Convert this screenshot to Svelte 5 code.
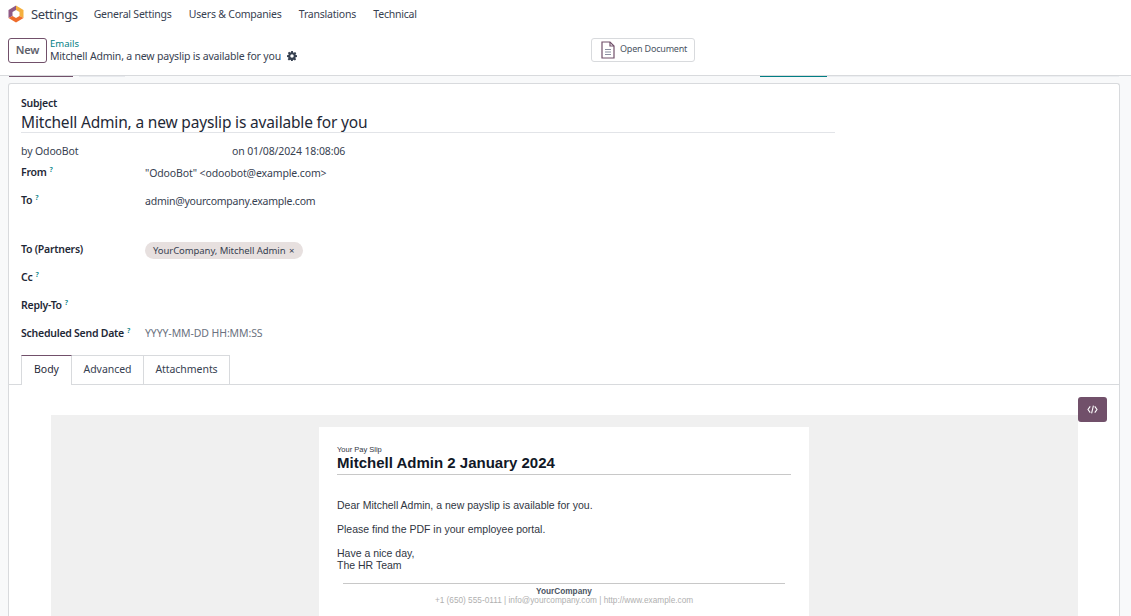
<script>
  const fields = [
    { label: 'From', help: true, value: '"OdooBot" <odoobot@example.com>', cls: 'r-from' },
    { label: 'To', help: true, value: 'admin@yourcompany.example.com', cls: 'r-to' },
    { label: 'To (Partners)', help: false, tag: 'YourCompany, Mitchell Admin', cls: 'r-partners' },
    { label: 'Cc', help: true, value: '', cls: 'r-cc' },
    { label: 'Reply-To', help: true, value: '', cls: 'r-reply' },
    { label: 'Scheduled Send Date', help: true, value: 'YYYY-MM-DD HH:MM:SS', muted: true, cls: 'r-date' }
  ];
</script>

<div class="page">
  <nav class="nav">
    <svg class="logo" viewBox="0 0 18 18" width="18" height="18" aria-hidden="true">
      <path d="M9 .5 16.500 5v8L12.500 11V7L9 5z" fill="#f5b03e"/>
      <path d="M9 .5 1.500 5v8l4-2V7L9 5z" fill="#8f5a86"/>
      <path d="M1.500 13 9 17.500 16.500 13l-4-2L9 13l-3.500-2z" fill="#ee6c2b"/>
    </svg>
    <span class="brand">Settings</span>
    <span class="menu">General Settings</span>
    <span class="menu">Users &amp; Companies</span>
    <span class="menu">Translations</span>
    <span class="menu">Technical</span>
  </nav>

  <header class="control">
    <button class="new">New</button>
    <div class="crumbs">
      <span class="crumb">Emails</span>
      <div class="title">
        <span>Mitchell Admin, a new payslip is available for you</span>
        <svg viewBox="0 0 16 16" width="10" height="10" aria-hidden="true">
          <path fill="#374151" fill-rule="evenodd" d="M6.600 0h2.800l.4 2.200 1.200.5L12.900 1.400l2 2-1.300 1.900.5 1.200 1.900.4v2.800l-2.200.4-.5 1.200 1.300 1.900-2 2-1.900-1.300-1.200.5-.4 2.100H6.600l-.4-2.200-1.200-.5-1.900 1.300-2-2 1.300-1.900-.5-1.200L0 9.400V6.600l2.200-.4.5-1.200L1.400 3.100l2-2 1.900 1.300 1.200-.5zM8 5.200a2.800 2.800 0 1 0 0 5.600 2.800 2.800 0 0 0 0-5.600z"/>
        </svg>
      </div>
    </div>
    <button class="doc">
      <svg viewBox="0 0 16 18" width="16" height="18" aria-hidden="true">
        <path d="M2 1h8l4 4v12H2z" fill="#fff" stroke="#71506a" stroke-width="1.200"/>
        <path d="M10 1v4h4" fill="none" stroke="#71506a" stroke-width="1.200"/>
        <path d="M5 8.500h6M5 11h6M5 13.500h6" stroke="#8a8fa0" stroke-width="1.200"/>
      </svg>
      <span>Open Document</span>
    </button>
  </header>

  <div class="band">
    <i class="stub purple"></i>
    <i class="stub gray"></i>
    <i class="stub teal"></i>
    <i class="stub rest"></i>
  </div>

  <main class="sheet">
    <div class="subject-block">
      <div class="label">Subject</div>
      <div class="subject">Mitchell Admin, a new payslip is available for you</div>
    </div>
    <div class="meta">
      <span class="by">by OdooBot</span>
      <span>on 01/08/2024 18:08:06</span>
    </div>

    <div class="fields">
      {#each fields as f}
        <div class="row {f.cls}">
          <div class="label">{f.label}{#if f.help}<sup>?</sup>{/if}</div>
          {#if f.tag}
            <span class="tag">{f.tag} <b>×</b></span>
          {:else}
            <div class="value" class:muted={f.muted}>{f.value}</div>
          {/if}
        </div>
      {/each}
    </div>

    <div class="tabs">
      <span class="tab active">Body</span>
      <span class="tab adv">Advanced</span>
      <span class="tab att">Attachments</span>
    </div>

    <div class="body">
      <button class="code" aria-label="Code view">
        <svg viewBox="0 0 12 10" width="11" height="9" aria-hidden="true">
          <path d="M3.500 1.500 1 5l2.500 3.500M8.500 1.500 11 5 8.500 8.500M7 .8 5 9.200" fill="none" stroke="#fff" stroke-width="1.200"/>
        </svg>
      </button>
      <div class="canvas">
        <div class="mail">
          <div class="mail-top">
            <div class="small">Your Pay Slip</div>
            <div class="head">Mitchell Admin 2 January 2024</div>
          </div>
          <div class="mail-body">
            <p>Dear Mitchell Admin, a new payslip is available for you.</p>
            <p>Please find the PDF in your employee portal.</p>
            <p>Have a nice day,<br />The HR Team</p>
          </div>
          <div class="mail-foot">
            <div class="company">YourCompany</div>
            <div class="contact">+1 (650) 555-0111 | info@yourcompany.com | http://www.example.com</div>
          </div>
        </div>
      </div>
    </div>
  </main>
</div>

<style>
  :global(body) { margin: 0; overflow: hidden; background: #fff; }
  .page {
    width: 1131px;
    height: 616px;
    overflow: hidden;
    background: #f8f9fa;
    font-family: "Noto Sans", "Open Sans", sans-serif;
    font-size: 11.5px;
    color: #374151;
    display: flex;
    flex-direction: column;
  }
  .nav {
    height: 28px;
    background: #fff;
    display: flex;
    align-items: center;
    padding-left: 7px;
    flex: none;
  }
  .logo { flex: none; margin-right: 6px; }
  .brand { font-size: 13px; letter-spacing: -0.35px; margin-right: 16px; }
  .menu { margin-right: 17.300px; font-size: 10.500px; letter-spacing: -0.22px; }
  .control {
    height: 48px;
    background: #fff;
    border-bottom: 1px solid #d8dadd;
    display: flex;
    align-items: flex-start;
    padding: 10px 0 0 8px;
    position: relative;
    flex: none;
    box-sizing: border-box;
  }
  button { font-family: inherit; cursor: pointer; }
  .new {
    width: 39px;
    height: 25px;
    padding: 0 0 3px;
    margin-right: 3px;
    background: #fff;
    border: 1px solid #71506a;
    border-radius: 3px;
    color: #5f5f6b;
    font-weight: 600;
    font-size: 11px;
    letter-spacing: -0.25px;
  }
  .crumbs { display: flex; flex-direction: column; line-height: 12px; }
  .crumb { color: #017e84; font-size: 9.500px; }
  .title { display: flex; align-items: center; gap: 6px; font-size: 10.500px; letter-spacing: -0.19px; }
  .doc {
    position: absolute;
    left: 591px;
    top: 10px;
    width: 104px;
    height: 24px;
    display: flex;
    align-items: center;
    gap: 4px;
    padding: 0 0 0 8px;
    background: #fff;
    border: 1px solid #d8dadd;
    border-radius: 3px;
    color: #4b5563;
    font-size: 9px;
    letter-spacing: -0.2px;
    box-sizing: border-box;
  }
  .doc svg { margin-top: -1px; }
  .doc span { margin-bottom: 3px; }
  .band { height: 7px; position: relative; flex: none; }
  .stub { position: absolute; top: 0; height: 1px; }
  .purple { left: 9px; width: 64px; background: #71506a; }
  .gray { left: 79px; width: 46px; background: #e7e9ed; }
  .teal { left: 760px; width: 67px; background: #017e84; }
  .rest { left: 827px; width: 292px; background: #eceef1; }
  .sheet {
    margin-left: 8px;
    margin-right: 11px;
    flex: 1;
    background: #fff;
    border: 1px solid #d8dadd;
    border-bottom: 0;
    border-radius: 3px 3px 0 0;
    min-height: 0;
  }
  .subject-block { margin: 12px 0 0 12px; width: 814px; border-bottom: 1px solid #e2e4e8; }
  .label { font-weight: 600; color: #1f2937; font-size: 10.500px; line-height: 14px; letter-spacing: -0.25px; }
  .subject { font-size: 15.500px; line-height: 20px; padding-top: 2px; letter-spacing: -0.17px; color: #1f2937; }
  .meta { display: flex; margin: 11px 0 0 12px; line-height: 15px; font-size: 10.500px; letter-spacing: -0.12px; }
  .by { width: 211px; }
  .fields { margin: 0 0 0 12px; }
  .row { display: grid; grid-template-columns: 124px 1fr; align-items: center; }
  .r-from { height: 28px; align-items: start; padding-top: 6px; box-sizing: border-box; }
  .r-to { height: 50px; align-items: start; padding-top: 6px; box-sizing: border-box; }
  .r-partners { height: 24px; }
  .r-cc { height: 28px; margin-top: 2px; }
  .r-reply { height: 28px; }
  .r-date { height: 28px; }
  .value { font-size: 10.500px; line-height: 15px; letter-spacing: -0.23px; }
  .r-from .value { letter-spacing: -0.13px; padding-top: 1px; }
  .r-to .value { padding-top: 1px; }
  .value.muted { color: #6b7280; letter-spacing: -0.1px; }
  sup { font-size: 7px; color: #017e84; margin-left: 3px; vertical-align: 4px; line-height: 0; font-weight: 600; }
  .tag {
    justify-self: start;
    margin-top: 2px;
    background: #e7e0df;
    border-radius: 9px;
    height: 17px;
    line-height: 17px;
    padding: 0 9px 0 8px;
    font-size: 9.500px;
    letter-spacing: -0.07px;
    color: #374151;
  }
  .tag b { font-weight: 400; margin-left: 1px; }
  .tabs {
    display: flex;
    margin-top: 8px;
    padding-left: 12px;
    height: 30px;
    box-sizing: border-box;
    border-bottom: 1px solid #d8dadd;
  }
  .tab {
    line-height: 27px;
    text-align: center;
    border: 1px solid #d8dadd;
    border-bottom: 0;
    border-left-width: 0;
    font-size: 10.500px;
    letter-spacing: -0.05px;
    height: 29px;
    box-sizing: border-box;
  }
  .adv { width: 72px; }
  .att { width: 86px; }
  .tab.active {
    width: 51px;
    border-top: 1px solid #71506a;
    border-left: 1px solid #d8dadd;
    background: #fff;
    height: 30px;
    color: #1f2937;
  }
  .body { position: relative; padding: 30px 41px 0 42px; height: 221px; box-sizing: border-box; }
  .code {
    position: absolute;
    top: 12px;
    right: 12px;
    width: 29px;
    height: 25px;
    padding: 0;
    background: #71506a;
    border: 0;
    border-radius: 3px;
    display: flex;
    align-items: center;
    justify-content: center;
  }
  .canvas {
    background: #f0f0f0;
    height: 202px;
    padding: 12px 0 0 268px;
    box-sizing: border-box;
  }
  .mail {
    width: 490px;
    height: 190px;
    background: #fff;
    padding: 19px 18px 0;
    box-sizing: border-box;
    font-family: "Liberation Sans", Arial, sans-serif;
    color: #30363f;
    font-size: 10.500px;
  }
  .mail-top { border-bottom: 1px solid #c8c8c8; height: 28px; }
  .small { font-size: 7.500px; line-height: 8px; }
  .head { font-size: 15px; font-weight: 700; line-height: 18px; color: #111827; }
  .mail-body { margin-top: 24px; line-height: 12px; }
  .mail-body p { margin: 0 0 12px; }
  .mail-foot { margin: 0 6px; border-top: 1px solid #c8c8c8; text-align: center; line-height: 9px; padding-top: 3px; }
  .company { font-size: 8.250px; font-weight: 700; color: #4b5563; }
  .contact { font-size: 8.250px; color: #b0b0b0; }
</style>
